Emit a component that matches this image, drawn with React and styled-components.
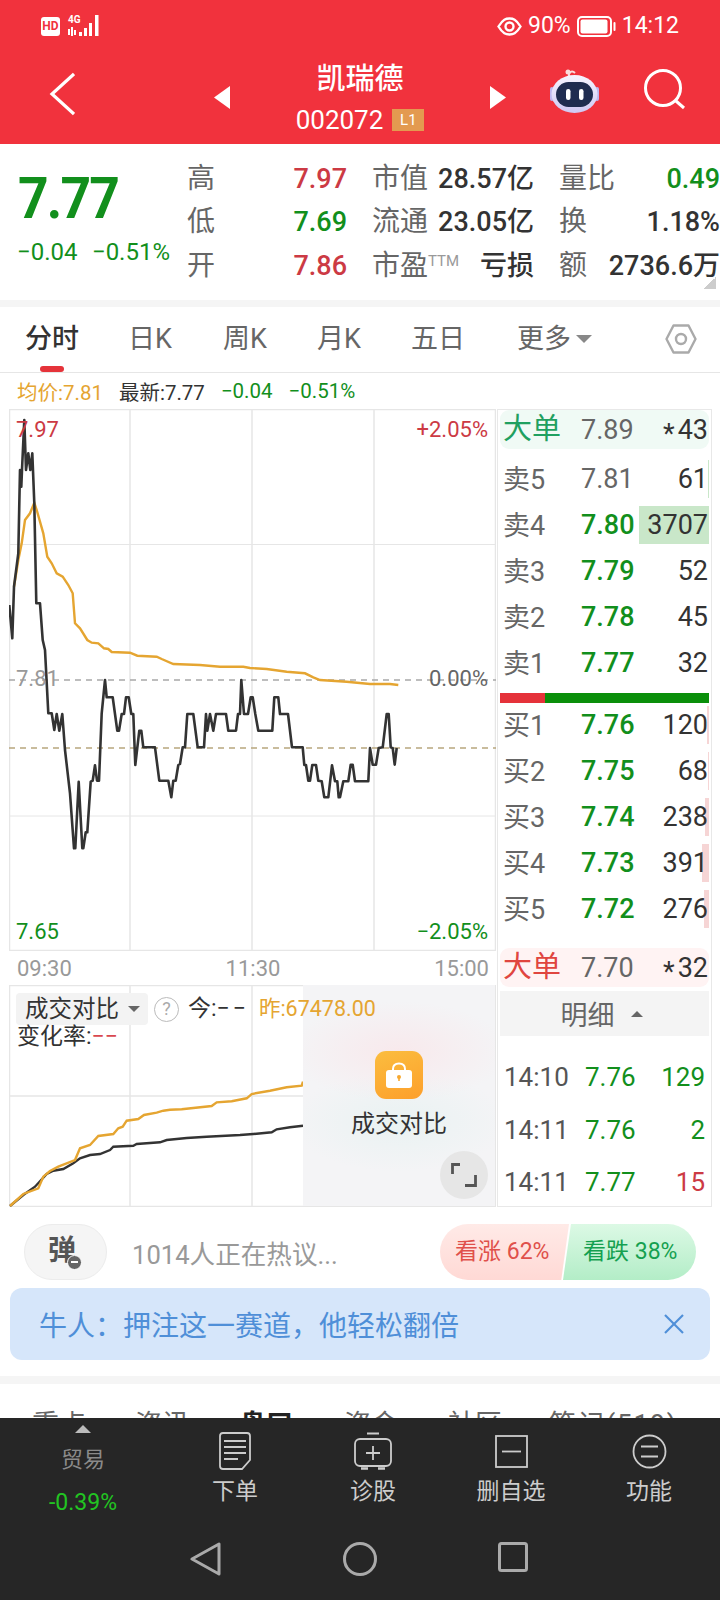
import styled, { createGlobalStyle } from "styled-components";

const FONT = `Roboto, "Noto Sans CJK SC", sans-serif`;
const RED = "#cc3a44";
const GREEN = "#128f1c";
const GOLD = "#e5a531";
const INK = "#333";

const GlobalStyle = createGlobalStyle`
  html, body {
    margin: 0;
    padding: 0;
    background: #fff;
  }
  * {
    box-sizing: border-box;
  }
`;

const Page = styled.div`
  width: 720px;
  height: 1600px;
  overflow: hidden;
  display: flex;
  flex-direction: column;
  background: #fff;
  font-family: ${FONT};
  color: ${INK};
`;

/* red top area */
const TopArea = styled.header`
  height: 144px;
  background: #f1323d;
  color: #fff;
`;

const StatusBar = styled.div`
  height: 50px;
  padding: 15px 41px 0;
  display: flex;
  justify-content: space-between;
  align-items: flex-start;
`;

const StatusGroup = styled.div`
  display: flex;
  align-items: center;
  height: 22px;
  gap: ${(p) => p.$gap || 7}px;
`;

const HdBadge = styled.span`
  width: 19px;
  height: 19px;
  background: #fff;
  color: #f1323d;
  border-radius: 3px;
  font-size: 12px;
  font-weight: 700;
  line-height: 19px;
  text-align: center;
`;

const NetBlock = styled.div`
  position: relative;
  width: 32px;
  height: 22px;
`;

const NetLabel = styled.span`
  position: absolute;
  left: 0;
  top: -1px;
  font-size: 10px;
  font-weight: 700;
  line-height: 11px;
`;

const StatusText = styled.span`
  font-size: 23px;
  line-height: 22px;
  color: #fff;
`;

const NavBar = styled.div`
  height: 94px;
  position: relative;
  display: flex;
  align-items: center;
  justify-content: center;
`;

const BackIcon = styled.svg`
  position: absolute;
  left: 49px;
  top: 22px;
`;

const NavActions = styled.div`
  position: absolute;
  left: 550px;
  top: 19px;
  display: flex;
  gap: 44px;
  align-items: flex-start;
`;

const StockSwitch = styled.div`
  width: 292px;
  display: flex;
  justify-content: space-between;
  align-items: center;
`;

const StockTitle = styled.div`
  display: flex;
  flex-direction: column;
  align-items: center;
`;

const StockName = styled.div`
  font-size: 29px;
  line-height: 38px;
  font-weight: 500;
`;

const StockCode = styled.div`
  display: flex;
  align-items: center;
  gap: 9px;
  font-size: 26px;
  line-height: 30px;
  margin-top: 7px;
`;

const LevelBadge = styled.span`
  width: 32px;
  height: 22px;
  background: #e39a50;
  color: #fff;
  font-size: 15px;
  line-height: 22px;
  text-align: center;
`;

/* price summary */
const QuoteSection = styled.section`
  height: 156px;
  position: relative;
  display: flex;
  padding: 13px 0 0 18px;
`;

const PriceBlock = styled.div`
  width: 169px;
`;

const LastPrice = styled.div`
  font-size: 58px;
  line-height: 58px;
  font-weight: 700;
  color: ${GREEN};
  letter-spacing: -2px;
  margin-top: 12px;
  transform: scaleX(0.92);
  transform-origin: left;
`;

const PriceChange = styled.div`
  display: flex;
  justify-content: space-between;
  width: 153px;
  margin: 11px 0 0 -1px;
  font-size: 24px;
  line-height: 28px;
  color: ${GREEN};
`;

const QuoteGrid = styled.div`
  display: grid;
  grid-template-columns: 160px 162px 161px;
  grid-auto-rows: 43.5px;
  column-gap: 25px;
  align-items: center;
`;

const QuoteCell = styled.div`
  display: flex;
  justify-content: space-between;
  align-items: center;
  font-size: 28px;
  line-height: 36px;
  white-space: nowrap;
`;

const QuoteLabel = styled.span`
  color: #666;
  font-size: 28px;
`;

const QuoteValue = styled.span`
  color: ${(p) => p.$color || INK};
  font-size: 27px;
  font-weight: 500;
`;

const TtmMark = styled.sup`
  font-size: 15px;
  color: #999;
  vertical-align: 9px;
  line-height: 0;
`;

const CornerMark = styled.i`
  position: absolute;
  right: 4px;
  bottom: 11px;
  width: 12px;
  height: 12px;
  background: linear-gradient(135deg, transparent 50%, #ccc 50%);
`;

const SectionGap = styled.div`
  height: ${(p) => p.$height || 7}px;
  flex: none;
  background: #f5f5f5;
  margin-top: ${(p) => p.$top || 0}px;
`;

/* period switcher */
const PeriodTabs = styled.nav`
  height: 66px;
  flex: none;
  position: relative;
  border-bottom: 1px solid #e6e6e6;
`;

const PeriodRow = styled.div`
  display: grid;
  grid-template-columns: 103px 95px 94px 94px 106px 148px auto;
  padding: 15px 0 0 25px;
  align-items: center;
`;

const PeriodItem = styled.span`
  display: flex;
  align-items: center;
  gap: 5px;
  font-size: 27px;
  line-height: 34px;
  font-weight: ${(p) => (p.$active ? 500 : 400)};
  color: ${(p) => (p.$active ? INK : "#666")};
`;

const ActiveMark = styled.i`
  position: absolute;
  left: 40px;
  bottom: 0;
  width: 24px;
  height: 6px;
  border-radius: 3px;
  background: #e5333a;
`;

const Caret = styled.i`
  display: inline-block;
  width: 0;
  height: 0;
  border-left: ${(p) => p.$size || 7}px solid transparent;
  border-right: ${(p) => p.$size || 7}px solid transparent;
  border-${(p) => (p.$up ? "bottom" : "top")}: ${(p) => p.$size || 7}px solid ${(p) => p.$color || "#888"};
`;

const LegendRow = styled.div`
  height: 36px;
  flex: none;
  display: flex;
  align-items: center;
  padding-left: 17px;
  font-size: 20.5px;
`;

const LegendItem = styled.span`
  color: ${(p) => p.$color || INK};
  margin-right: 16px;
`;

/* chart + order book */
const Market = styled.div`
  height: 798px;
  flex: none;
  display: flex;
`;

const ChartColumn = styled.div`
  width: 497px;
  padding-left: 9px;
`;

const ChartFrame = styled.div`
  position: relative;
  width: 487px;
  height: ${(p) => p.$height}px;
  overflow: hidden;
`;

const ChartSvg = styled.svg`
  display: block;
`;

const ChartLabel = styled.span`
  position: absolute;
  top: ${(p) => p.$top}px;
  ${(p) => (p.$right ? "right: 8px;" : "left: 7px;")}
  font-size: 22px;
  line-height: 24px;
  color: ${(p) => p.$color};
`;

const TimeAxis = styled.div`
  height: 34px;
  display: flex;
  justify-content: space-between;
  align-items: center;
  padding: 0 8px;
  font-size: 22px;
  color: #999;
`;

const VolumeHead = styled.div`
  position: absolute;
  left: 7px;
  top: 8px;
  right: 0;
  z-index: 2;
`;

const VolumeTop = styled.div`
  display: flex;
  align-items: center;
  font-size: 23.5px;
  line-height: 32px;
`;

const MetricPick = styled.div`
  width: 132px;
  height: 32px;
  background: #f3f3f3;
  border-radius: 4px;
  padding-left: 9px;
  display: flex;
  align-items: center;
  gap: 9px;
  margin-right: 6px;
`;

const HelpIcon = styled.span`
  width: 25px;
  height: 25px;
  border: 1.5px solid #bbb;
  border-radius: 50%;
  color: #aaa;
  font-size: 18px;
  line-height: 22px;
  text-align: center;
  margin-right: 9px;
`;

const VolumeText = styled.span`
  color: ${(p) => p.$color || INK};
  margin-right: ${(p) => p.$gap || 0}px;
  font-size: ${(p) => p.$size || 23}px;
`;

const DashPair = styled.span`
  letter-spacing: 3px;
`;

const RateLine = styled.div`
  line-height: 22px;
  margin-top: 1px;
  margin-left: 1px;
`;

const LockVeil = styled.div`
  position: absolute;
  left: 294px;
  top: 0;
  width: 192px;
  bottom: 1px;
  z-index: 1;
  display: flex;
  flex-direction: column;
  align-items: center;
  padding-top: 66px;
  background:
    radial-gradient(ellipse 110px 50px at 50% 30%, #f8e9ec 0%, rgba(248, 233, 236, 0) 100%),
    radial-gradient(ellipse 110px 50px at 50% 62%, #e9f2f2 0%, rgba(233, 242, 242, 0) 100%),
    #f4f4f6;
`;

const LockTile = styled.div`
  width: 48px;
  height: 48px;
  border-radius: 11px;
  background: linear-gradient(160deg, #fbbd3f, #fd9f2b);
  display: flex;
  align-items: center;
  justify-content: center;
`;

const LockCaption = styled.div`
  font-size: 24px;
  line-height: 30px;
  margin-top: 10px;
`;

const ExpandButton = styled.button`
  position: absolute;
  right: 7px;
  bottom: 7px;
  width: 48px;
  height: 48px;
  padding: 0;
  border: 0;
  border-radius: 50%;
  background: #e6e6e6;
  display: flex;
  align-items: center;
  justify-content: center;
`;

/* order book */
const BookPanel = styled.aside`
  width: 215px;
  height: 798px;
  padding: 0 2px;
  border: 1px solid #e8e8e8;
  font-size: 27px;
`;

const BigOrder = styled.div`
  height: 39px;
  border-radius: 9px;
  background: ${(p) => p.$bg};
  margin-top: ${(p) => p.$top || 0}px;
  display: grid;
  grid-template-columns: 78px 1fr auto;
  grid-template-rows: 39px;
  align-items: center;
  padding: 0 1px 0 3px;
`;

const BigLabel = styled.span`
  font-size: 29px;
  line-height: 39px;
  color: ${(p) => p.$color};
`;

const BookRows = styled.div`
  margin-top: ${(p) => p.$top || 0}px;
`;

const BookRow = styled.div`
  position: relative;
  height: 46px;
  display: grid;
  grid-template-columns: 78px 1fr auto;
  grid-template-rows: 46px;
  align-items: center;
  padding: 0 1px 0 3px;
`;

const DepthBar = styled.i`
  position: absolute;
  right: 0;
  top: 4px;
  bottom: 4px;
  width: ${(p) => p.$width}px;
  background: ${(p) => p.$color};
`;

const BookLabel = styled.span`
  position: relative;
  top: -2px;
  color: #666;
`;

const BookPrice = styled.span`
  color: ${(p) => p.$color || "#666"};
  font-weight: ${(p) => (p.$color ? 500 : 400)};
`;

const BookQty = styled.span`
  position: relative;
  color: ${INK};
`;

const LargeStar = styled.span`
  position: relative;
  top: 4px;
  margin-right: 3px;
`;

const RatioBar = styled.div`
  height: 10px;
  margin-top: 7px;
  background: #0a8f0a;
`;

const RatioFill = styled.div`
  width: 45px;
  height: 100%;
  background: #e5323a;
`;

const DetailHead = styled.div`
  height: 45px;
  margin-top: 4px;
  background: #f4f4f4;
  display: flex;
  align-items: center;
  justify-content: center;
  gap: 16px;
  color: #666;
  padding-right: 6px;
`;

const TradeList = styled.div`
  margin-top: 15px;
`;

const TradeRow = styled.div`
  height: 52.5px;
  display: grid;
  grid-template-columns: 81px 1fr auto;
  align-items: center;
  padding: 0 4px;
  font-size: 26px;
`;

const TradeTime = styled.span`
  color: #555;
`;

const TradeValue = styled.span`
  color: ${(p) => p.$color};
`;

/* chatter row */
const ChatterRow = styled.div`
  height: 56px;
  flex: none;
  margin-top: 17px;
  padding: 0 24px;
  display: flex;
  align-items: center;
`;

const DanmuToggle = styled.div`
  position: relative;
  width: 83px;
  height: 56px;
  border-radius: 28px;
  background: #f5f5f5;
  border: 1px solid #ececec;
  color: #555;
  font-size: 28px;
  font-weight: 700;
  line-height: 52px;
  padding-left: 23px;
`;

const DanmuMinus = styled.i`
  position: absolute;
  left: 42px;
  top: 30px;
  width: 15px;
  height: 15px;
  border-radius: 50%;
  background: #666;
  border: 1px solid #fff;
  &::after {
    content: "";
    position: absolute;
    left: 3px;
    top: 5px;
    width: 7px;
    height: 2px;
    background: #fff;
  }
`;

const ChatterText = styled.span`
  margin-left: 25px;
  font-size: 25.6px;
  color: #999;
`;

const VoteGroup = styled.div`
  margin-left: auto;
  width: 256px;
  height: 56px;
  display: flex;
`;

const VoteSide = styled.div`
  flex: none;
  width: ${(p) => p.$width}px;
  margin-left: ${(p) => p.$overlap || 0}px;
  background: linear-gradient(${(p) => p.$from}, ${(p) => p.$to});
  clip-path: ${(p) => p.$clip};
  border-radius: ${(p) => p.$radius};
  color: ${(p) => p.$color};
  font-size: 23px;
  line-height: 56px;
  padding-left: ${(p) => p.$pad}px;
  white-space: nowrap;
`;

const Banner = styled.div`
  height: 72px;
  flex: none;
  margin: 8px 10px 0;
  padding: 0 26px 0 29px;
  border-radius: 12px;
  background: #d6e6fa;
  color: #4f8fd8;
  font-size: 28px;
  display: flex;
  align-items: center;
  justify-content: space-between;
`;

const InfoTabs = styled.nav`
  height: 34px;
  flex: none;
  overflow: hidden;
  font-size: 27px;
  color: #666;
  display: grid;
  grid-template-columns: 103px 104px 105px 104px 101px auto;
  padding: 21px 0 0 32px;
  line-height: 40px;
`;

const InfoTab = styled.span`
  font-weight: ${(p) => (p.$active ? 700 : 400)};
  color: ${(p) => (p.$active ? "#222" : "#666")};
  letter-spacing: ${(p) => p.$spread || 0}px;
`;

/* dark dock */
const Dock = styled.footer`
  flex: 1;
  background: #262626;
  color: #ccc;
`;

const DockRow = styled.div`
  height: 108px;
  display: grid;
  grid-template-columns: 166px repeat(4, 138px);
`;

const TradeCell = styled.div`
  display: flex;
  flex-direction: column;
  align-items: center;
  padding-top: 7px;
`;

const TradeName = styled.div`
  font-size: 22px;
  line-height: 24px;
  color: #8a8a8a;
  margin-top: 15px;
`;

const TradeMove = styled.div`
  font-size: 23px;
  line-height: 26px;
  color: #22c422;
  margin-top: 18px;
`;

const DockItem = styled.div`
  display: flex;
  flex-direction: column;
  align-items: center;
  padding-top: 14px;
  font-size: 23px;
`;

const DockIconBox = styled.div`
  height: 38px;
  display: flex;
  align-items: center;
  justify-content: center;
`;

const DockLabel = styled.span`
  line-height: 28px;
  margin-top: 8px;
`;

const SystemNav = styled.div`
  height: 74px;
  padding: 16px 0 0 190px;
  display: flex;
  gap: 121px;
  align-items: flex-start;
`;

/* price line, traced on a 3x grid from x = 0, y = 640 */
const PRICE_LINE = [
  [28, -105], [37, -5], [42, -160], [55, -260], [60, -510], [64, -460], [66, -510], [73, -660],
  [78, -510], [85, -560], [91, -510], [97, -560], [103, -410], [109, -110], [120, -110], [128, 0], [135, 30],
  [145, 220], [155, 220], [163, 270], [170, 222], [178, 272], [187, 222], [195, 330], [210, 460],
  [222, 625], [226, 625], [236, 425], [247, 625], [250, 625], [257, 577], [262, 577], [272, 425],
  [278, 422], [285, 376], [291, 422], [297, 422], [305, 220], [315, 120], [320, 172], [338, 172],
  [352, 272], [357, 272], [365, 222], [372, 222], [378, 172], [386, 172], [394, 222], [400, 222],
  [406, 375], [418, 272], [424, 272], [430, 322], [465, 322], [478, 422], [505, 422], [514, 472],
  [520, 422], [527, 422], [535, 375], [540, 372], [548, 322], [555, 322], [562, 222], [580, 222],
  [593, 322], [612, 322], [618, 222], [622, 272], [630, 222], [640, 272], [648, 222], [678, 222],
  [685, 272], [708, 272], [714, 222], [720, 222], [724, 120], [732, 222], [744, 222], [752, 172],
  [758, 172], [766, 222], [775, 272], [817, 272], [823, 172], [835, 172], [840, 222], [864, 222],
  [876, 322], [908, 322], [913, 375], [918, 375], [925, 422], [930, 422], [937, 375], [948, 375],
  [955, 422], [965, 424], [973, 472], [985, 472], [996, 376], [1005, 424], [1012, 424], [1016, 472],
  [1020, 472], [1030, 424], [1045, 424], [1052, 374], [1058, 374], [1065, 424], [1105, 424],
  [1110, 324], [1118, 374], [1128, 374], [1136, 324], [1148, 322], [1160, 222], [1166, 222],
  [1172, 322], [1178, 324], [1184, 374], [1190, 324],
];
const AVERAGE_LINE = [
  [42, -160], [55, -240], [65, -290], [75, -360], [90, -380], [103, -412], [110, -390], [130, -320],
  [142, -250], [155, -230], [170, -200], [188, -190], [205, -165], [218, -140], [225, -50], [240, -35],
  [262, 0], [275, 8], [295, 10], [312, 25], [325, 27], [335, 36], [390, 38], [412, 47], [470, 50],
  [485, 57], [520, 72], [600, 75], [660, 80], [730, 80], [750, 84], [800, 87], [860, 95], [915, 100],
  [940, 112], [960, 120], [1040, 125], [1110, 132], [1170, 132], [1195, 135],
];
const VOLUME_TODAY = [
  [30, 708], [70, 675], [105, 650], [140, 612], [160, 602], [190, 597], [220, 580], [240, 565], [270, 555],
  [300, 552], [330, 540], [340, 530], [400, 527], [410, 522], [480, 517], [500, 510], [560, 504], [620, 500],
  [720, 495], [760, 492], [815, 487], [830, 478], [870, 472], [909, 467],
];
const VOLUME_PREV = [
  [30, 708], [70, 672], [115, 655], [130, 620], [150, 603], [175, 590], [225, 570], [240, 535], [270, 525],
  [295, 498], [340, 492], [355, 475], [368, 470], [380, 452], [415, 447], [432, 435], [470, 428], [490, 422],
  [510, 419], [545, 418], [635, 408], [650, 397], [695, 394], [740, 385], [755, 372], [810, 362], [860, 352],
  [905, 347], [909, 335],
];

const toPoints = (list, top) =>
  list.map(([x, y]) => `${(x / 3).toFixed(1)},${(top + y / 3).toFixed(1)}`).join(" ");

const GRID = "#e6e6e6";

const PriceChart = () => (
  <ChartSvg width="487" height="542" viewBox="9 409 487 542">
    <rect x="9.5" y="409.5" width="486" height="541" fill="none" stroke={GRID} strokeWidth="1.5" />
    {[130, 252, 374].map((x) => (
      <line key={x} x1={x} y1="409" x2={x} y2="951" stroke={GRID} strokeWidth="1.5" />
    ))}
    <line x1="9" y1="544.5" x2="496" y2="544.5" stroke={GRID} />
    <line x1="9" y1="816" x2="496" y2="816" stroke={GRID} />
    <line x1="9" y1="680" x2="496" y2="680" stroke="#a8a8a8" strokeWidth="1.5" strokeDasharray="6 5" />
    <line x1="9" y1="748" x2="496" y2="748" stroke="#b8a67e" strokeWidth="1.5" strokeDasharray="6 5" />
    <polyline points={toPoints(AVERAGE_LINE, 640)} fill="none" stroke={GOLD} strokeWidth="2.4" />
    <polyline
      points={toPoints(PRICE_LINE, 640)}
      fill="none"
      stroke="#333"
      strokeWidth="2.6"
      strokeLinejoin="round"
    />
  </ChartSvg>
);

const VolumeChart = () => (
  <ChartSvg width="487" height="222" viewBox="9 985 487 222">
    <rect x="9.5" y="985.5" width="486" height="221" fill="none" stroke={GRID} strokeWidth="1.5" />
    {[130, 252, 374].map((x) => (
      <line key={x} x1={x} y1="985" x2={x} y2="1207" stroke={GRID} strokeWidth="1.5" />
    ))}
    <line x1="9" y1="1096" x2="496" y2="1096" stroke={GRID} strokeWidth="1.5" />
    <polyline points={toPoints(VOLUME_TODAY, 970)} fill="none" stroke="#333" strokeWidth="2.4" />
    <polyline points={toPoints(VOLUME_PREV, 970)} fill="none" stroke={GOLD} strokeWidth="2.4" />
  </ChartSvg>
);

const SignalBars = () => (
  <svg width="32" height="22" viewBox="0 0 32 22" fill="#fff">
    <rect x="0" y="14" width="2" height="6" />
    <rect x="3" y="12" width="2" height="9" />
    <rect x="6" y="15" width="2" height="5" />
    <rect x="11" y="17" width="3" height="4" />
    <rect x="16" y="13" width="3" height="8" />
    <rect x="21" y="8" width="3" height="13" />
    <rect x="27" y="0" width="3.5" height="21" />
  </svg>
);

const EyeIcon = () => (
  <svg width="25" height="19" viewBox="0 0 25 19" fill="none" stroke="#fff" strokeWidth="2.4">
    <path d="M1.5 9.5 C6 2 9 1.5 12.5 1.5 S19 2 23.5 9.5 C19 17 16 17.5 12.5 17.5 S6 17 1.5 9.5 Z" />
    <circle cx="12.5" cy="9.5" r="4" />
  </svg>
);

const BatteryIcon = () => (
  <svg width="39" height="21" viewBox="0 0 39 21">
    <rect x="1" y="1" width="33" height="19" rx="4" fill="none" stroke="#fff" strokeWidth="2" />
    <rect x="3.5" y="3.5" width="27" height="14" rx="2" fill="#fff" />
    <rect x="36.5" y="6" width="2" height="9" rx="1" fill="#fff" />
  </svg>
);

const RobotIcon = () => (
  <svg width="50" height="46" viewBox="0 0 50 46">
    <defs>
      <linearGradient id="robotShell" x1="0" y1="0" x2="0" y2="1">
        <stop offset="0" stopColor="#f6f4ff" />
        <stop offset="1" stopColor="#cfc8f3" />
      </linearGradient>
    </defs>
    <path d="M19 8 C18 3 22 1 25 4" fill="none" stroke="#fbdcdc" strokeWidth="2" />
    <circle cx="18" cy="3" r="2.5" fill="#fbdcdc" />
    <rect x="0" y="18" width="4" height="14" rx="2" fill="#bdb6ee" />
    <rect x="45" y="18" width="4" height="14" rx="2" fill="#bdb6ee" />
    <ellipse cx="24.5" cy="25" rx="23" ry="19" fill="url(#robotShell)" />
    <rect x="6" y="13" width="37" height="25" rx="12.5" fill="#1f2c50" />
    <rect x="16" y="20" width="4.5" height="11" rx="2.2" fill="#fff" />
    <rect x="29" y="20" width="4.5" height="11" rx="2.2" fill="#fff" />
  </svg>
);

const SearchIcon = () => (
  <svg width="44" height="44" viewBox="0 0 44 44" fill="none" stroke="#fff" strokeWidth="3">
    <circle cx="19" cy="19" r="17.5" />
    <line x1="32" y1="32" x2="40" y2="39" />
  </svg>
);

const SettingsHex = () => (
  <svg width="32" height="30" viewBox="0 0 32 30" fill="none" stroke="#aaa" strokeWidth="2.4">
    <path d="M8.5 1.5 H23.5 L30.5 15 L23.5 28.5 H8.5 L1.5 15 Z" strokeLinejoin="round" />
    <circle cx="16" cy="15" r="5" />
  </svg>
);

const LockGlyph = () => (
  <svg width="28" height="28" viewBox="0 0 28 28">
    <path d="M8 12 V8 C8 4 10.5 2.5 14 2.5 S20 4 20 8 V12" fill="none" stroke="#fff" strokeWidth="2" />
    <rect x="1" y="9" width="26" height="18" rx="3" fill="#fff" />
    <circle cx="14" cy="16" r="2" fill="#f7a830" />
    <rect x="13.2" y="16" width="1.6" height="4" fill="#f7a830" />
  </svg>
);

const ExpandGlyph = () => (
  <svg width="26" height="24" viewBox="0 0 26 24" fill="none" stroke="#555" strokeWidth="2.8">
    <path d="M1.5 11 V1.5 H9" />
    <path d="M24.5 12 V22.5 H14" />
  </svg>
);

const CloseGlyph = () => (
  <svg width="20" height="20" viewBox="0 0 20 20" stroke="#4f8fd8" strokeWidth="2.2">
    <line x1="1" y1="1" x2="19" y2="19" />
    <line x1="19" y1="1" x2="1" y2="19" />
  </svg>
);

const OrderIcon = () => (
  <svg width="32" height="38" viewBox="0 0 32 38" fill="none" stroke="#ccc" strokeWidth="1.8">
    <path d="M4 1 H28 Q31 1 31 4 V28 L23 37 H4 Q1 37 1 34 V4 Q1 1 4 1 Z" />
    <path d="M5 9 H27 M5 15 H27 M5 21 H27 M5 27 H19" />
  </svg>
);

const DiagnoseIcon = () => (
  <svg width="38" height="38" viewBox="0 0 38 38" fill="none" stroke="#ccc" strokeWidth="1.8">
    <path d="M13 1.5 H25" strokeWidth="2" />
    <rect x="1" y="7" width="36" height="27" rx="5" />
    <path d="M19 14 V28 M12 21 H26" />
    <path d="M7 36.5 H14 M24 36.5 H31" strokeWidth="2.4" />
  </svg>
);

const RemoveIcon = () => (
  <svg width="33" height="33" viewBox="0 0 33 33" fill="none" stroke="#ccc" strokeWidth="1.8">
    <rect x="1" y="1" width="31" height="31" />
    <path d="M7 16.5 H26" />
  </svg>
);

const MenuIcon = () => (
  <svg width="35" height="35" viewBox="0 0 35 35" fill="none" stroke="#ccc" strokeWidth="1.8">
    <circle cx="17.5" cy="17.5" r="16" />
    <path d="M9 12.5 H26 M9 22.5 H26" />
  </svg>
);

const ASKS = [
  { name: "卖5", price: "7.81", qty: "61", bar: 1 },
  { name: "卖4", price: "7.80", qty: "3707", bar: 70, color: GREEN },
  { name: "卖3", price: "7.79", qty: "52", color: GREEN },
  { name: "卖2", price: "7.78", qty: "45", color: GREEN },
  { name: "卖1", price: "7.77", qty: "32", color: GREEN },
];

const BIDS = [
  { name: "买1", price: "7.76", qty: "120", bar: 2 },
  { name: "买2", price: "7.75", qty: "68", bar: 1 },
  { name: "买3", price: "7.74", qty: "238", bar: 4 },
  { name: "买4", price: "7.73", qty: "391", bar: 7 },
  { name: "买5", price: "7.72", qty: "276", bar: 5 },
];

const TRADES = [
  { time: "14:10", price: "7.76", qty: "129", color: GREEN },
  { time: "14:11", price: "7.76", qty: "2", color: GREEN },
  { time: "14:11", price: "7.77", qty: "15", color: RED },
];

const App = () => (
  <Page>
    <GlobalStyle />
    <TopArea>
      <StatusBar>
        <StatusGroup $gap={8}>
          <HdBadge>HD</HdBadge>
          <NetBlock>
            <NetLabel>4G</NetLabel>
            <SignalBars />
          </NetBlock>
        </StatusGroup>
        <StatusGroup $gap={6}>
          <EyeIcon />
          <StatusText>90%</StatusText>
          <BatteryIcon />
          <StatusText>14:12</StatusText>
        </StatusGroup>
      </StatusBar>
      <NavBar>
        <BackIcon width="26" height="44" viewBox="0 0 26 44" fill="none" stroke="#fff" strokeWidth="3.2">
          <path d="M25 2 L3 22 L25 42" />
        </BackIcon>
        <StockSwitch>
          <svg width="16" height="23" viewBox="0 0 16 23" fill="#fff">
            <path d="M16 0 V23 L0 11.5 Z" />
          </svg>
          <StockTitle>
            <StockName>凯瑞德</StockName>
            <StockCode>
              002072
              <LevelBadge>L1</LevelBadge>
            </StockCode>
          </StockTitle>
          <svg width="16" height="23" viewBox="0 0 16 23" fill="#fff">
            <path d="M0 0 V23 L16 11.5 Z" />
          </svg>
        </StockSwitch>
        <NavActions>
          <RobotIcon />
          <SearchIcon />
        </NavActions>
      </NavBar>
    </TopArea>

    <QuoteSection>
      <PriceBlock>
        <LastPrice>7.77</LastPrice>
        <PriceChange>
          <span>−0.04</span>
          <span>−0.51%</span>
        </PriceChange>
      </PriceBlock>
      <QuoteGrid>
        <QuoteCell>
          <QuoteLabel>高</QuoteLabel>
          <QuoteValue $color={RED}>7.97</QuoteValue>
        </QuoteCell>
        <QuoteCell>
          <QuoteLabel>市值</QuoteLabel>
          <QuoteValue>28.57亿</QuoteValue>
        </QuoteCell>
        <QuoteCell>
          <QuoteLabel>量比</QuoteLabel>
          <QuoteValue $color={GREEN}>0.49</QuoteValue>
        </QuoteCell>
        <QuoteCell>
          <QuoteLabel>低</QuoteLabel>
          <QuoteValue $color={GREEN}>7.69</QuoteValue>
        </QuoteCell>
        <QuoteCell>
          <QuoteLabel>流通</QuoteLabel>
          <QuoteValue>23.05亿</QuoteValue>
        </QuoteCell>
        <QuoteCell>
          <QuoteLabel>换</QuoteLabel>
          <QuoteValue>1.18%</QuoteValue>
        </QuoteCell>
        <QuoteCell>
          <QuoteLabel>开</QuoteLabel>
          <QuoteValue $color={RED}>7.86</QuoteValue>
        </QuoteCell>
        <QuoteCell>
          <QuoteLabel>
            市盈<TtmMark>TTM</TtmMark>
          </QuoteLabel>
          <QuoteValue>亏损</QuoteValue>
        </QuoteCell>
        <QuoteCell>
          <QuoteLabel>额</QuoteLabel>
          <QuoteValue>2736.6万</QuoteValue>
        </QuoteCell>
      </QuoteGrid>
      <CornerMark />
    </QuoteSection>
    <SectionGap />

    <PeriodTabs>
      <PeriodRow>
        <PeriodItem $active>分时</PeriodItem>
        <PeriodItem>日K</PeriodItem>
        <PeriodItem>周K</PeriodItem>
        <PeriodItem>月K</PeriodItem>
        <PeriodItem>五日</PeriodItem>
        <PeriodItem>
          更多
          <Caret $size={8} />
        </PeriodItem>
        <SettingsHex />
      </PeriodRow>
      <ActiveMark />
    </PeriodTabs>

    <LegendRow>
      <LegendItem $color={GOLD}>均价:7.81</LegendItem>
      <LegendItem>最新:7.77</LegendItem>
      <LegendItem $color={GREEN}>−0.04</LegendItem>
      <LegendItem $color={GREEN}>−0.51%</LegendItem>
    </LegendRow>

    <Market>
      <ChartColumn>
        <ChartFrame $height={542}>
          <PriceChart />
          <ChartLabel $top={9} $color={RED}>7.97</ChartLabel>
          <ChartLabel $top={9} $right $color={RED}>+2.05%</ChartLabel>
          <ChartLabel $top={258} $color="#999">7.81</ChartLabel>
          <ChartLabel $top={258} $right $color="#666">0.00%</ChartLabel>
          <ChartLabel $top={511} $color={GREEN}>7.65</ChartLabel>
          <ChartLabel $top={511} $right $color={GREEN}>−2.05%</ChartLabel>
        </ChartFrame>
        <TimeAxis>
          <span>09:30</span>
          <span>11:30</span>
          <span>15:00</span>
        </TimeAxis>
        <ChartFrame $height={222}>
          <VolumeChart />
          <LockVeil>
            <LockTile>
              <LockGlyph />
            </LockTile>
            <LockCaption>成交对比</LockCaption>
            <ExpandButton>
              <ExpandGlyph />
            </ExpandButton>
          </LockVeil>
          <VolumeHead>
            <VolumeTop>
              <MetricPick>
                成交对比
                <Caret $size={6} $color="#666" />
              </MetricPick>
              <HelpIcon>?</HelpIcon>
              <VolumeText $gap={10}>
                今:<DashPair>−−</DashPair>
              </VolumeText>
              <VolumeText $color={GOLD} $size={21.5}>昨:67478.00</VolumeText>
            </VolumeTop>
            <RateLine>
              <VolumeText>变化率:</VolumeText>
              <VolumeText $color="#d9484f">−−</VolumeText>
            </RateLine>
          </VolumeHead>
        </ChartFrame>
      </ChartColumn>

      <BookPanel>
        <BigOrder $bg="#f0faf5">
          <BigLabel $color="#1fa060">大单</BigLabel>
          <BookPrice>7.89</BookPrice>
          <BookQty>
            <LargeStar>*</LargeStar>43
          </BookQty>
        </BigOrder>
        <BookRows $top={7}>
          {ASKS.map((row) => (
            <BookRow key={row.name}>
              {row.bar && <DepthBar $width={row.bar} $color="#c9e7c9" />}
              <BookLabel>{row.name}</BookLabel>
              <BookPrice $color={row.color}>{row.price}</BookPrice>
              <BookQty>{row.qty}</BookQty>
            </BookRow>
          ))}
        </BookRows>
        <RatioBar>
          <RatioFill />
        </RatioBar>
        <BookRows $top={-1}>
          {BIDS.map((row) => (
            <BookRow key={row.name}>
              <DepthBar $width={row.bar} $color="#f6d5d5" />
              <BookLabel>{row.name}</BookLabel>
              <BookPrice $color={GREEN}>{row.price}</BookPrice>
              <BookQty>{row.qty}</BookQty>
            </BookRow>
          ))}
        </BookRows>
        <BigOrder $bg="#fff3f3" $top={16}>
          <BigLabel $color="#e0453f">大单</BigLabel>
          <BookPrice>7.70</BookPrice>
          <BookQty>
            <LargeStar>*</LargeStar>32
          </BookQty>
        </BigOrder>
        <DetailHead>
          明细
          <Caret $up $size={6} $color="#666" />
        </DetailHead>
        <TradeList>
          {TRADES.map((row, i) => (
            <TradeRow key={i}>
              <TradeTime>{row.time}</TradeTime>
              <TradeValue $color={GREEN}>{row.price}</TradeValue>
              <TradeValue $color={row.color}>{row.qty}</TradeValue>
            </TradeRow>
          ))}
        </TradeList>
      </BookPanel>
    </Market>

    <ChatterRow>
      <DanmuToggle>
        弹
        <DanmuMinus />
      </DanmuToggle>
      <ChatterText>1014人正在热议...</ChatterText>
      <VoteGroup>
        <VoteSide
          $width={129}
          $from="#ffeae7"
          $to="#ffd9d5"
          $color="#e0504a"
          $pad={15}
          $radius="28px 0 0 28px"
          $clip="polygon(0 0, 100% 0, 94% 100%, 0 100%)"
        >
          看涨 62%
        </VoteSide>
        <VoteSide
          $width={133}
          $from="#dcf9e5"
          $to="#b3edc7"
          $color="#15a050"
          $pad={20}
          $overlap={-6}
          $radius="0 28px 28px 0"
          $clip="polygon(6% 0, 100% 0, 100% 100%, 0 100%)"
        >
          看跌 38%
        </VoteSide>
      </VoteGroup>
    </ChatterRow>

    <Banner>
      <span>牛人：押注这一赛道，他轻松翻倍</span>
      <CloseGlyph />
    </Banner>
    <SectionGap $height={8} $top={16} />

    <InfoTabs>
      <InfoTab>重点</InfoTab>
      <InfoTab>资讯</InfoTab>
      <InfoTab $active>盘口</InfoTab>
      <InfoTab>资金</InfoTab>
      <InfoTab>社区</InfoTab>
      <InfoTab $spread={1.5}>笔记(519)</InfoTab>
    </InfoTabs>

    <Dock>
      <DockRow>
        <TradeCell>
          <Caret $up $size={8} $color="#bbb" />
          <TradeName>贸易</TradeName>
          <TradeMove>-0.39%</TradeMove>
        </TradeCell>
        <DockItem>
          <DockIconBox>
            <OrderIcon />
          </DockIconBox>
          <DockLabel>下单</DockLabel>
        </DockItem>
        <DockItem>
          <DockIconBox>
            <DiagnoseIcon />
          </DockIconBox>
          <DockLabel>诊股</DockLabel>
        </DockItem>
        <DockItem>
          <DockIconBox>
            <RemoveIcon />
          </DockIconBox>
          <DockLabel>删自选</DockLabel>
        </DockItem>
        <DockItem>
          <DockIconBox>
            <MenuIcon />
          </DockIconBox>
          <DockLabel>功能</DockLabel>
        </DockItem>
      </DockRow>
      <SystemNav>
        <svg width="32" height="34" viewBox="0 0 32 34" fill="none" stroke="#aaa" strokeWidth="3" strokeLinejoin="round">
          <path d="M29 2 V32 L2 17 Z" />
        </svg>
        <svg width="34" height="34" viewBox="0 0 34 34" fill="none" stroke="#aaa" strokeWidth="3">
          <circle cx="17" cy="17" r="15.5" />
        </svg>
        <svg width="30" height="30" viewBox="0 0 30 30" fill="none" stroke="#aaa" strokeWidth="3">
          <rect x="1.5" y="1.5" width="27" height="27" rx="2" />
        </svg>
      </SystemNav>
    </Dock>
  </Page>
);

export default App;
